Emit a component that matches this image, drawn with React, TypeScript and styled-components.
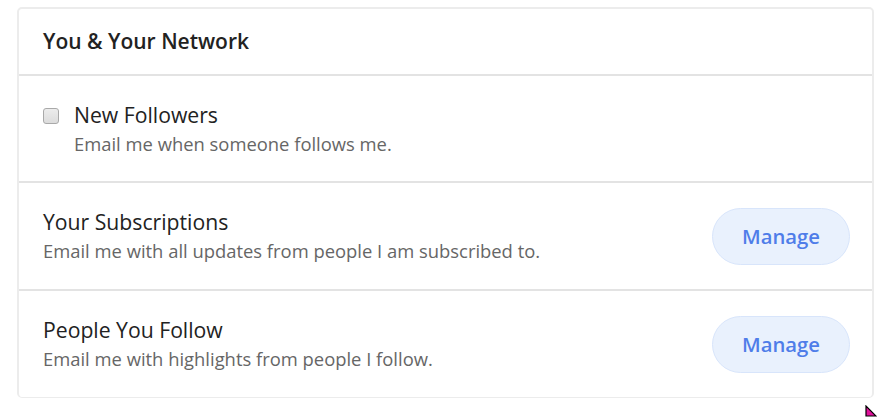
import React, { FC } from "react";
import styled, { createGlobalStyle } from "styled-components";

const GlobalStyle = createGlobalStyle`
	body {
		margin: 0;
		background: #ffffff;
		font-family: "Open Sans", "Noto Sans", "Liberation Sans", sans-serif;
		color: #222;
	}
`;

const Page = styled.div`
	position: relative;
	min-height: 417px;
	box-sizing: border-box;
	padding: 7px 7px 0 17px;
`;

const Card = styled.section`
	border: 2px solid #ececec;
	border-bottom-width: 1px;
	border-radius: 5px;
	background: #fff;
`;

const Header = styled.header`
	padding: 17px 24px 17px;
	border-bottom: 2px solid #e3e3e3;
`;

const Title = styled.h2`
	margin: 0;
	font-size: 21px;
	font-weight: 600;
	line-height: 31px;
	color: #222;
`;

const Row = styled.div<{ $height: number; $last?: boolean }>`
	display: flex;
	align-items: center;
	justify-content: space-between;
	gap: 24px;
	height: ${(p) => p.$height}px;
	padding: 0 22px 0 24px;
	border-bottom: ${(p) => (p.$last ? "none" : "2px solid #e3e3e3")};
`;

const Left = styled.div`
	display: flex;
	align-items: flex-start;
	gap: 15px;
`;

const Checkbox = styled.span`
	flex: none;
	width: 14px;
	height: 14px;
	margin-top: 8px;
	border: 1px solid #a9a9a9;
	border-radius: 3px;
	background: linear-gradient(#ececec, #dcdcdc);
`;

const Texts = styled.div`
	display: flex;
	flex-direction: column;
`;

const Label = styled.div`
	font-size: 21.2px;
	line-height: 29px;
	color: #222;
`;

const Desc = styled.div`
	font-size: 18.4px;
	line-height: 29px;
	color: #666;
`;

const ManageButton = styled.button`
	flex: none;
	width: 138px;
	height: 57px;
	border: 1px solid #d8e5fb;
	border-radius: 29px;
	background: #e9f1fd;
	color: #4f7de9;
	font-family: inherit;
	font-size: 20.3px;
	font-weight: 600;
	cursor: pointer;
`;

const Cursor = styled.svg`
	position: absolute;
	left: 865px;
	top: 405px;
	display: block;
`;

type Item = {
	label: string;
	desc: string;
	height: number;
	checkbox?: boolean;
	manage?: boolean;
};

const items: Item[] = [
	{
		label: "New Followers",
		desc: "Email me when someone follows me.",
		height: 105,
		checkbox: true,
	},
	{
		label: "Your Subscriptions",
		desc: "Email me with all updates from people I am subscribed to.",
		height: 106,
		manage: true,
	},
	{
		label: "People You Follow",
		desc: "Email me with highlights from people I follow.",
		height: 106,
		manage: true,
	},
];

const App: FC = () => {
	return (
		<Page>
			<GlobalStyle />
			<Card>
				<Header>
					<Title>You &amp; Your Network</Title>
				</Header>
				{items.map((item, i) => (
					<Row
						key={item.label}
						$height={item.height}
						$last={i === items.length - 1}
					>
						<Left>
							{item.checkbox && <Checkbox />}
							<Texts>
								<Label>{item.label}</Label>
								<Desc>{item.desc}</Desc>
							</Texts>
						</Left>
						{item.manage && <ManageButton>Manage</ManageButton>}
					</Row>
				))}
			</Card>
			<Cursor width="12" height="12" viewBox="0 0 12 12">
				<path
					d="M1 1 L1 11 L11 11 Z"
					fill="#e0109a"
					stroke="#000"
					strokeWidth="1.2"
				/>
			</Cursor>
		</Page>
	);
};

export default App;
